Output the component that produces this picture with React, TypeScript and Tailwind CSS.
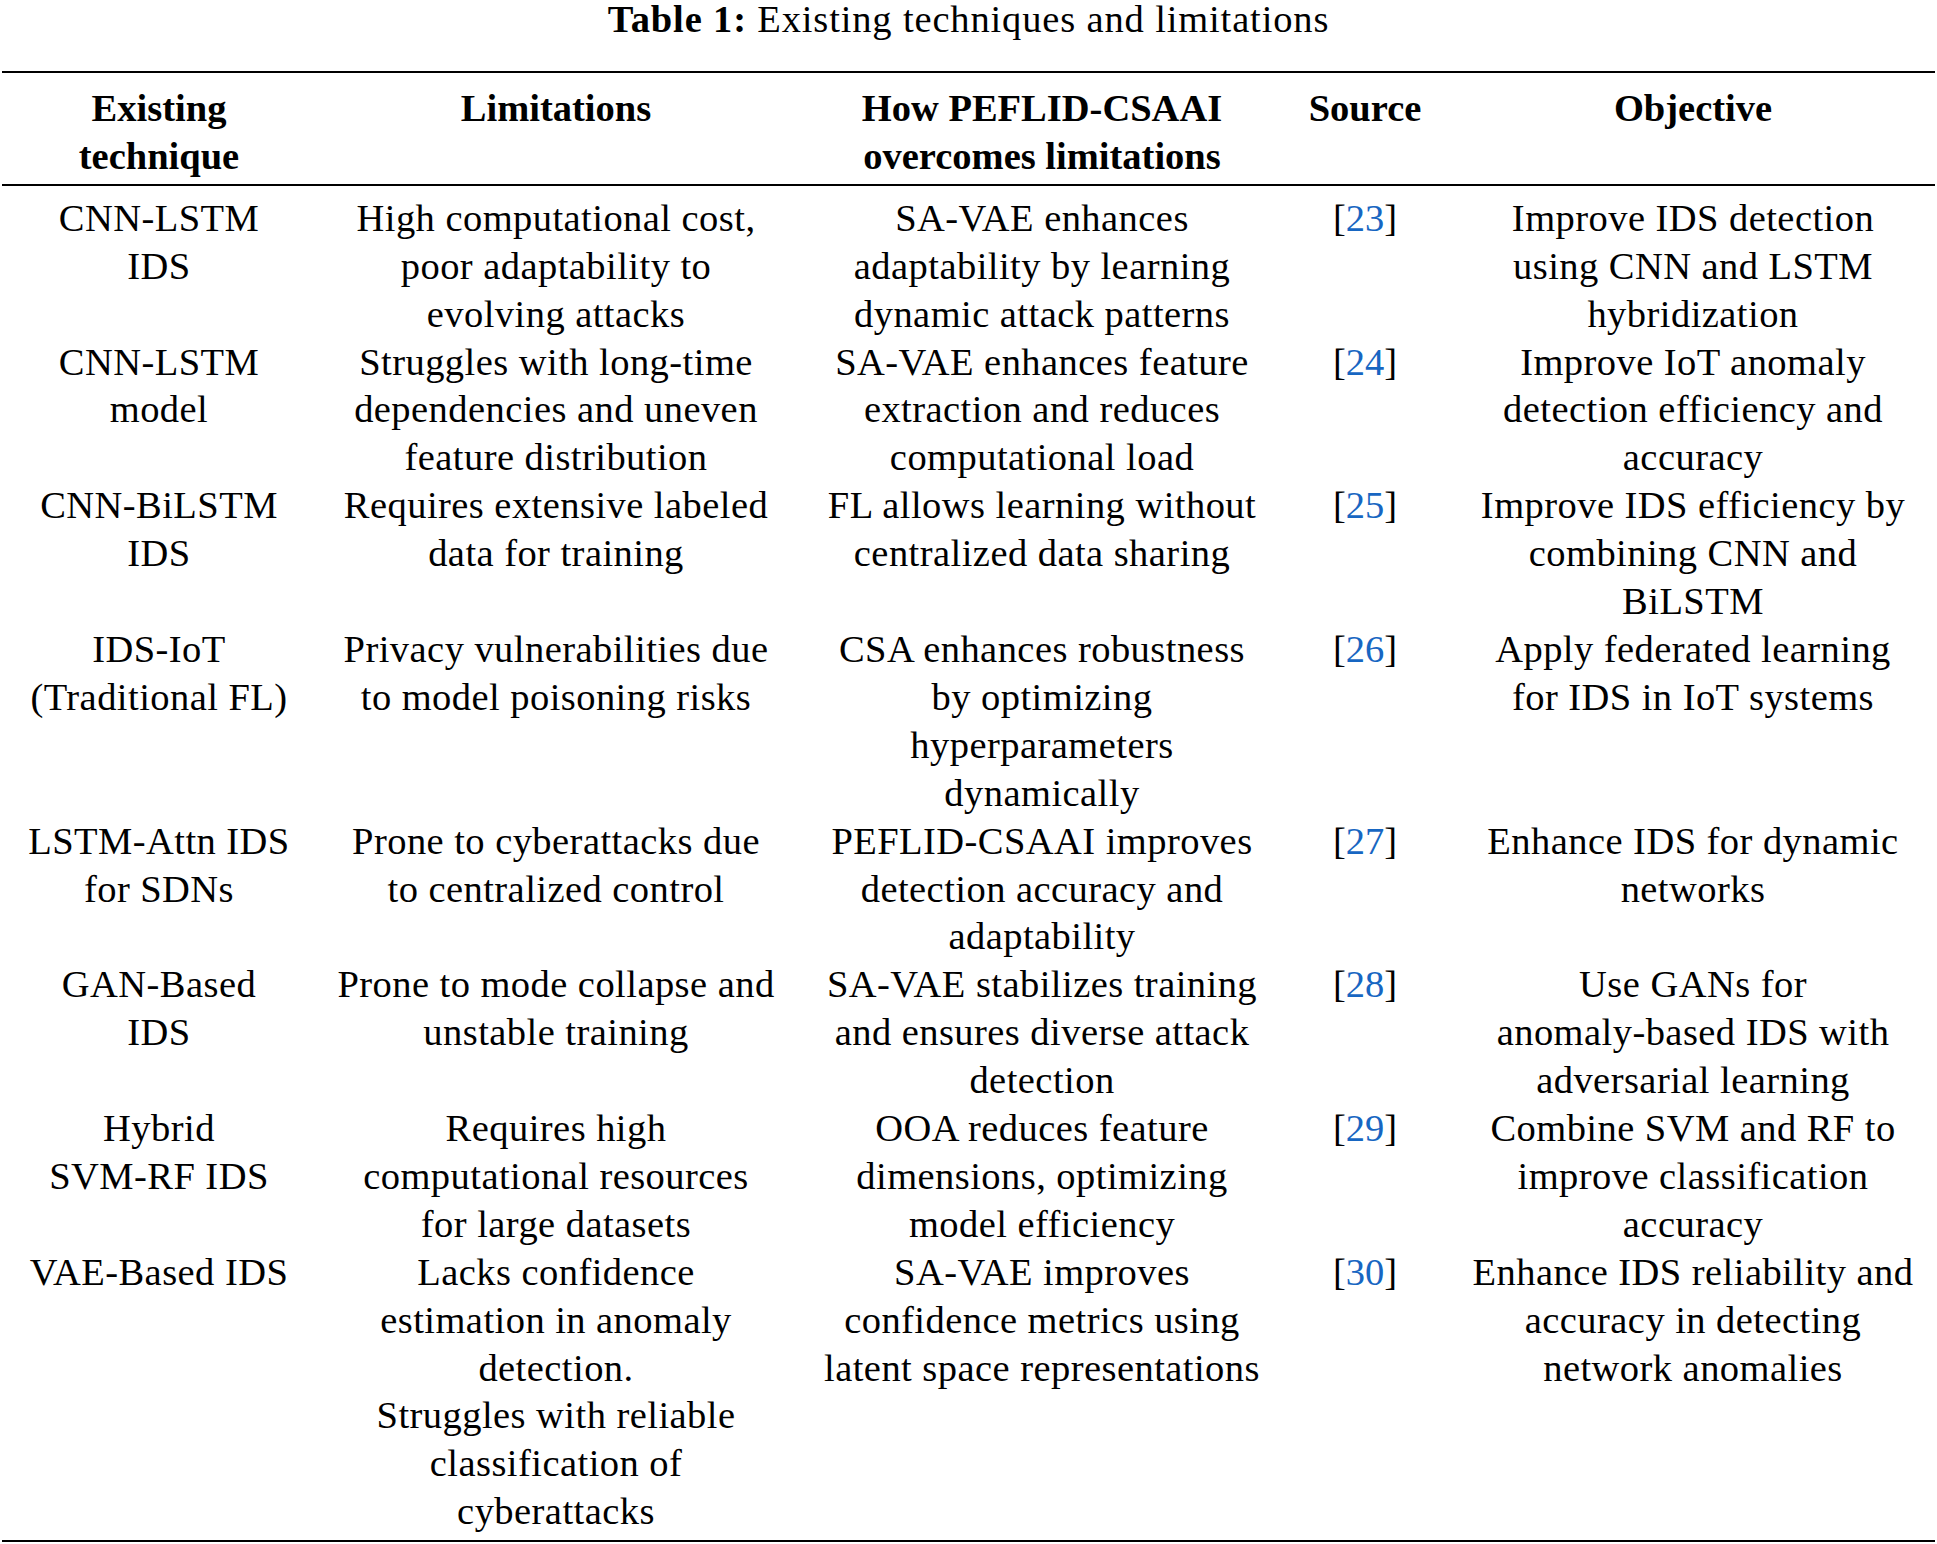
import React from "react";

type Row = { c1: string[]; c2: string[]; c3: string[]; src: string; c5: string[] };

const rows: Row[] = [
  {
    c1: ["CNN-LSTM", "IDS"],
    c2: ["High computational cost,", "poor adaptability to", "evolving attacks"],
    c3: ["SA-VAE enhances", "adaptability by learning", "dynamic attack patterns"],
    src: "23",
    c5: ["Improve IDS detection", "using CNN and LSTM", "hybridization"],
  },
  {
    c1: ["CNN-LSTM", "model"],
    c2: ["Struggles with long-time", "dependencies and uneven", "feature distribution"],
    c3: ["SA-VAE enhances feature", "extraction and reduces", "computational load"],
    src: "24",
    c5: ["Improve IoT anomaly", "detection efficiency and", "accuracy"],
  },
  {
    c1: ["CNN-BiLSTM", "IDS"],
    c2: ["Requires extensive labeled", "data for training"],
    c3: ["FL allows learning without", "centralized data sharing"],
    src: "25",
    c5: ["Improve IDS efficiency by", "combining CNN and", "BiLSTM"],
  },
  {
    c1: ["IDS-IoT", "(Traditional FL)"],
    c2: ["Privacy vulnerabilities due", "to model poisoning risks"],
    c3: ["CSA enhances robustness", "by optimizing", "hyperparameters", "dynamically"],
    src: "26",
    c5: ["Apply federated learning", "for IDS in IoT systems"],
  },
  {
    c1: ["LSTM-Attn IDS", "for SDNs"],
    c2: ["Prone to cyberattacks due", "to centralized control"],
    c3: ["PEFLID-CSAAI improves", "detection accuracy and", "adaptability"],
    src: "27",
    c5: ["Enhance IDS for dynamic", "networks"],
  },
  {
    c1: ["GAN-Based", "IDS"],
    c2: ["Prone to mode collapse and", "unstable training"],
    c3: ["SA-VAE stabilizes training", "and ensures diverse attack", "detection"],
    src: "28",
    c5: ["Use GANs for", "anomaly-based IDS with", "adversarial learning"],
  },
  {
    c1: ["Hybrid", "SVM-RF IDS"],
    c2: ["Requires high", "computational resources", "for large datasets"],
    c3: ["OOA reduces feature", "dimensions, optimizing", "model efficiency"],
    src: "29",
    c5: ["Combine SVM and RF to", "improve classification", "accuracy"],
  },
  {
    c1: ["VAE-Based IDS"],
    c2: [
      "Lacks confidence",
      "estimation in anomaly",
      "detection.",
      "Struggles with reliable",
      "classification of",
      "cyberattacks",
    ],
    c3: ["SA-VAE improves", "confidence metrics using", "latent space representations"],
    src: "30",
    c5: ["Enhance IDS reliability and", "accuracy in detecting", "network anomalies"],
  },
];

function Lines({ lines }: { lines: string[] }) {
  return (
    <>
      {lines.map((l, i) => (
        <div key={i} className="whitespace-nowrap">
          {l}
        </div>
      ))}
    </>
  );
}

const gridCols = "grid grid-cols-[314px_480px_492px_154px_493px]";

export default function App() {
  return (
    <div
      className="w-[1937px] bg-white text-black text-[38.5px]"
      style={{ fontFamily: '"Liberation Serif", "Times New Roman", serif' }}
    >
      <div className="h-[38px] leading-[38px] text-center whitespace-nowrap tracking-[0.85px]">
        <span className="font-bold">Table 1:</span> Existing techniques and limitations
      </div>
      <div className="px-[2px]">
        <div className="mt-[33px] h-[2px] bg-black" />
        <div className={`${gridCols} pt-[12px] pb-[3px] leading-[47.9px] font-bold text-center`}>
          <div>
            <Lines lines={["Existing", "technique"]} />
          </div>
          <div>
            <Lines lines={["Limitations"]} />
          </div>
          <div>
            <Lines lines={["How PEFLID-CSAAI", "overcomes limitations"]} />
          </div>
          <div>
            <Lines lines={["Source"]} />
          </div>
          <div className="pl-[9px]">
            <Lines lines={["Objective"]} />
          </div>
        </div>
        <div className="h-[2px] bg-black" />
        <div className={`${gridCols} pt-[9px] pb-[4px] leading-[47.9px] text-center tracking-[0.45px]`}>
          {rows.map((r, i) => (
            <React.Fragment key={i}>
              <div>
                <Lines lines={r.c1} />
              </div>
              <div>
                <Lines lines={r.c2} />
              </div>
              <div>
                <Lines lines={r.c3} />
              </div>
              <div className="whitespace-nowrap tracking-normal">
                [<span className="text-[#1766c2]">{r.src}</span>]
              </div>
              <div className="pl-[9px]">
                <Lines lines={r.c5} />
              </div>
            </React.Fragment>
          ))}
        </div>
        <div className="h-[2px] bg-black" />
      </div>
    </div>
  );
}
